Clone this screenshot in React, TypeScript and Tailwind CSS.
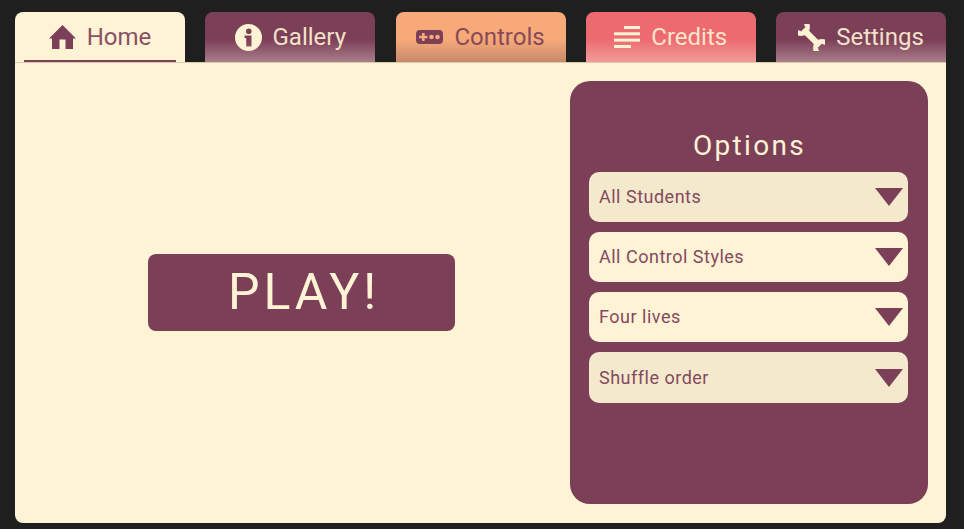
import React from 'react';

function HomeIcon() {
  return (
    <svg width="27" height="24" viewBox="0 0 27 24" fill="currentColor">
      <path d="M13.5 0 L27 13.5 H24 V24 H16.5 V14.5 H10.5 V24 H3 V13.5 H0 Z" />
    </svg>
  );
}

function InfoIcon() {
  return (
    <svg width="27" height="27" viewBox="0 0 27 27" fill="currentColor">
      <path
        fillRule="evenodd"
        d="M13.5 0 A13.5 13.5 0 1 1 13.5 27 A13.5 13.5 0 1 1 13.5 0 Z M13.8 4.5 A2.8 2.8 0 1 0 13.8 10.1 A2.8 2.8 0 1 0 13.8 4.5 Z M9.5 11.5 V14 H11.2 V22.5 H16.5 V11.5 Z"
      />
    </svg>
  );
}

function ControlsIcon() {
  return (
    <svg width="27" height="14" viewBox="0 0 27 14" fill="currentColor">
      <path
        fillRule="evenodd"
        d="M4 0 H23 A4 4 0 0 1 27 4 V10 A4 4 0 0 1 23 14 H4 A4 4 0 0 1 0 10 V4 A4 4 0 0 1 4 0 Z M6 3 V5.7 H3.2 V8.3 H6 V11 H8.6 V8.3 H11.4 V5.7 H8.6 V3 Z M15.5 4.7 A2.3 2.3 0 1 0 15.5 9.3 A2.3 2.3 0 1 0 15.5 4.7 Z M21.5 4.7 A2.3 2.3 0 1 0 21.5 9.3 A2.3 2.3 0 1 0 21.5 4.7 Z"
      />
    </svg>
  );
}

function CreditsIcon() {
  return (
    <svg width="26" height="22" viewBox="0 0 26 22" fill="currentColor">
      <rect x="10" y="0" width="16" height="3" />
      <rect x="0" y="6.3" width="26" height="3" />
      <rect x="0" y="12.6" width="26" height="3" />
      <rect x="0" y="19" width="17" height="3" />
    </svg>
  );
}

function WrenchIcon() {
  return (
    <svg width="27" height="27" viewBox="0 0 27 27" fill="currentColor" stroke="currentColor" strokeWidth="0.6" strokeLinejoin="round">
      <path
        transform="translate(13.5 13.5) rotate(45)"
        d="M-18.5 -6.5 L-11.5 -3 V3 L-18.5 6.5 Q-11 11.5 -6.5 2.8 H6.5 Q11 11.5 18.5 6.5 L11.5 3 V-3 L18.5 -6.5 Q11 -11.5 6.5 -2.8 H-6.5 Q-11 -11.5 -18.5 -6.5 Z"
      />
    </svg>
  );
}

const tabs = [
  { label: 'Gallery', icon: <InfoIcon />, cls: 'bg-gradient-to-b from-[#7c3f58] from-55% to-[#a97e8a] text-[#fff3d6]' },
  { label: 'Controls', icon: <ControlsIcon />, cls: 'bg-gradient-to-b from-[#f7a978] from-55% to-[#c88a6c] text-[#7c3f58]' },
  { label: 'Credits', icon: <CreditsIcon />, cls: 'bg-gradient-to-b from-[#ec6a70] from-55% to-[#f29a98] text-[#fff3d6]' },
  { label: 'Settings', icon: <WrenchIcon />, cls: 'bg-gradient-to-b from-[#7c3f58] from-55% to-[#a97e8a] text-[#fff3d6]' },
];

const options = [
  { label: 'All Students', bg: 'bg-[#f4e9cc]', h: 'h-[50px]' },
  { label: 'All Control Styles', bg: 'bg-[#fff3d6]', h: 'h-[50px]' },
  { label: 'Four lives', bg: 'bg-[#fff3d6]', h: 'h-[50px]' },
  { label: 'Shuffle order', bg: 'bg-[#f4e9cc]', h: 'h-[51px]' },
];

export default function App() {
  return (
    <div className="w-[964px] h-[529px] bg-[#1f1f1f] pl-[15px] pr-[18px] pt-3 pb-1.5 flex flex-col overflow-hidden" style={{ fontFamily: 'Roboto, sans-serif' }}>
      {/* tab row */}
      <div className="flex justify-between h-[50px]">
        <div className="w-[170px] rounded-t-lg bg-[#fff3d6] text-[#7c3f58] px-[9px]">
          <div className="h-full flex items-center justify-center gap-[11px] pt-[2px] border-b-2 border-[#7c3f58] text-2xl">
            <HomeIcon />
            <span className="opacity-90">Home</span>
          </div>
        </div>
        {tabs.map(tab => (
          <div key={tab.label} className={`w-[170px] rounded-t-lg flex items-center justify-center gap-[11px] text-2xl ${tab.cls}`}>
            {tab.icon}
            <span className="opacity-90">{tab.label}</span>
          </div>
        ))}
      </div>

      {/* main panel */}
      <div className="flex-1 bg-[#fff3d6] rounded-b-lg border-t border-[#d9cbae] flex pt-[18px] pb-[19px] pr-[18px]">
        <div className="flex-1 flex items-center justify-center pl-[18px]">
          <button className="w-[307px] h-[77px] rounded-lg bg-[#7c3f58] text-[#fff3d6] text-[50px] tracking-[4px] pl-[5px]">PLAY!</button>
        </div>
        <div className="w-[358px] rounded-[20px] bg-[#7c3f58] pl-[19px] pr-[20px] pt-[48px]">
          <h2 className="text-[#fff3d6] text-[28px] leading-[34px] text-center tracking-[2.3px] pl-[2px] mb-[9px]">Options</h2>
          <div className="flex flex-col gap-[10px]">
            {options.map(opt => (
              <div key={opt.label} className={`${opt.h} rounded-[10px] ${opt.bg} text-[#84495f] text-lg tracking-[0.5px] pl-[10px] pr-[5px] flex items-center justify-between`}>
                <span>{opt.label}</span>
                <svg width="28" height="18" viewBox="0 0 28 18" fill="#7c3f58"><path d="M0 0H28L14 18Z" /></svg>
              </div>
            ))}
          </div>
        </div>
      </div>
    </div>
  );
}
